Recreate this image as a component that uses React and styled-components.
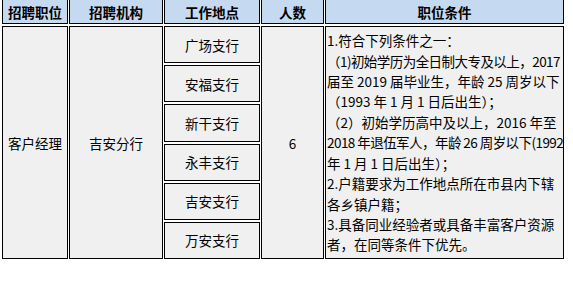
import React from 'react';
import styled, { createGlobalStyle } from 'styled-components';

const GlobalStyle = createGlobalStyle`
    body {
        margin: 0;
        background: #ffffff;
        font-family: "Noto Sans CJK SC", "Noto Sans", sans-serif;
    }
`;

const Table = styled.div`
    display: grid;
    grid-template-columns: 66px 94px 96px 63px 239px;
    grid-template-rows: 25px 233px;
    column-gap: 1px;
    row-gap: 2px;
    margin: -1px 0 0 2px;
    font-size: 13.5px;
    color: #000;
`;

const HeadCell = styled.div`
    box-sizing: border-box;
    border: 1px solid #000;
    background: #c5d9f1;
    font-weight: 700;
    display: flex;
    align-items: center;
    justify-content: center;
    white-space: nowrap;
`;

const Cell = styled.div`
    box-sizing: border-box;
    border: 1px solid #000;
    background: #f0f0f0;
    display: flex;
    align-items: center;
    justify-content: ${({ $left }) => ($left ? 'flex-start' : 'center')};
    white-space: nowrap;
    overflow: hidden;
`;

const Stack = styled.div`
    display: flex;
    flex-direction: column;
    gap: 2px;
`;

const Branch = styled(Cell)`
    flex: 1;
`;

const Conditions = styled(Cell)`
    padding-left: 1px;
    line-height: 20.4px;
`;

const Lines = styled.div`
    display: flex;
    flex-direction: column;
`;

const Line = styled.div`
    white-space: nowrap;
    letter-spacing: ${({ $squeeze }) => ($squeeze ? '-0.55px' : '0')};
`;

const heads = ['招聘职位', '招聘机构', '工作地点', '人数', '职位条件'];
const branches = ['广场支行', '安福支行', '新干支行', '永丰支行', '吉安支行', '万安支行'];
const lines = [
    { t: '1.符合下列条件之一：' },
    { t: '（1)初始学历为全日制大专及以上，2017', squeeze: true },
    { t: '届至 2019 届毕业生，年龄 25 周岁以下' },
    { t: '（1993 年 1 月 1 日后出生）；' },
    { t: '（2）初始学历高中及以上，2016 年至' },
    { t: '2018 年退伍军人，年龄 26 周岁以下(1992', squeeze: true },
    { t: '年 1 月 1 日后出生）；' },
    { t: '2.户籍要求为工作地点所在市县内下辖' },
    { t: '各乡镇户籍；' },
    { t: '3.具备同业经验者或具备丰富客户资源' },
    { t: '者，在同等条件下优先。' },
];

export default function App() {
    return (
        <>
            <GlobalStyle />
            <Table>
                {heads.map((h) => <HeadCell key={h}>{h}</HeadCell>)}
                <Cell>客户经理</Cell>
                <Cell>吉安分行</Cell>
                <Stack>
                    {branches.map((b) => <Branch key={b}>{b}</Branch>)}
                </Stack>
                <Cell>6</Cell>
                <Conditions $left>
                    <Lines>
                        {lines.map((l, i) => <Line key={i} $squeeze={l.squeeze}>{l.t}</Line>)}
                    </Lines>
                </Conditions>
            </Table>
        </>
    );
}
